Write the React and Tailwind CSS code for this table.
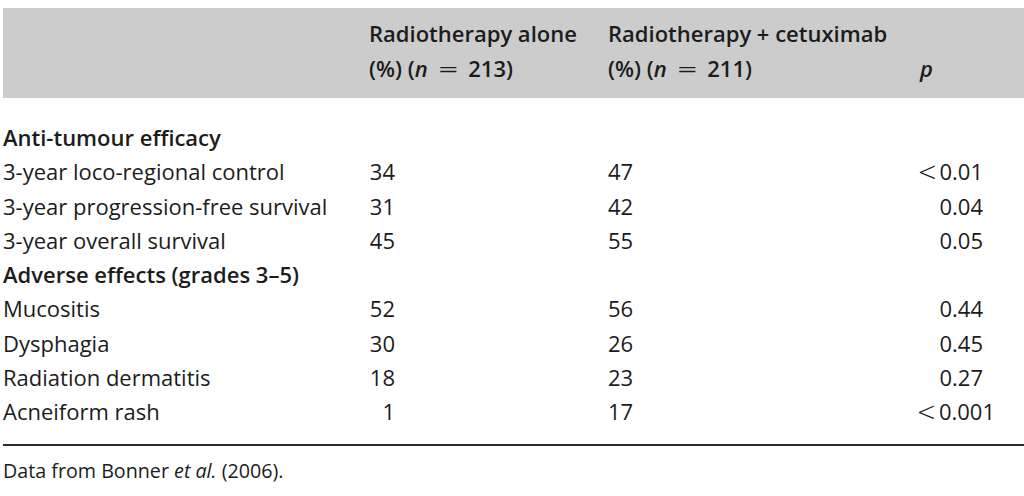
const rows = [
  { label: "Anti-tumour efficacy", heading: true },
  { label: "3-year loco-regional control", a: "34", b: "47", p: "<0.01" },
  { label: "3-year progression-free survival", a: "31", b: "42", p: "0.04" },
  { label: "3-year overall survival", a: "45", b: "55", p: "0.05" },
  { label: "Adverse effects (grades 3–5)", heading: true },
  { label: "Mucositis", a: "52", b: "56", p: "0.44" },
  { label: "Dysphagia", a: "30", b: "26", p: "0.45" },
  { label: "Radiation dermatitis", a: "18", b: "23", p: "0.27" },
  { label: "Acneiform rash", a: "1", b: "17", p: "<0.001", wide: true },
];

function PValue({ value, wide }) {
  const lt = value.startsWith("<");
  const num = lt ? value.slice(1) : value;
  return (
    <span className={wide ? "-mr-[12px]" : ""}>
      {lt && (
        <span className="mr-[3px] inline-block origin-right scale-x-[1.45] scale-y-[1.35] font-light">
          &lt;
        </span>
      )}
      {num}
    </span>
  );
}

function Count({ n }) {
  return (
    <>
      (%) (<i>n</i>
      <span className="mx-[14px] inline-block scale-x-[1.6] font-normal">=</span>
      {n})
    </>
  );
}

export default function App() {
  return (
    <div
      className="h-[496px] w-[1024px] overflow-hidden bg-white pt-[8px] pl-[3px] text-[#1c1c1c]"
      style={{ fontFamily: "'Open Sans', 'Noto Sans', sans-serif" }}
    >
      {/* header band */}
      <div className="grid grid-cols-[366px_239px_272px_103px_41px] whitespace-nowrap bg-[#cccccc] pt-[8px] pb-[12px] text-[22px] leading-[35px] font-semibold">
        <div />
        <div>
          Radiotherapy alone
          <br />
          <Count n="213" />
        </div>
        <div>
          Radiotherapy + cetuximab
          <br />
          <Count n="211" />
        </div>
        <div className="pl-[40px]">
          <br />
          <i>p</i>
        </div>
        <div />
      </div>

      {/* body */}
      <div className="mt-[22px] text-[22px] leading-[34.25px]">
        {rows.map((r) =>
          r.heading ? (
            <div key={r.label} className="font-semibold">
              {r.label}
            </div>
          ) : (
            <div key={r.label} className="grid grid-cols-[366px_239px_272px_103px] whitespace-nowrap">
              <div>{r.label}</div>
              <div>
                <span className="inline-block w-[26px] text-right">{r.a}</span>
              </div>
              <div>{r.b}</div>
              <div className="text-right">
                <PValue value={r.p} wide={r.wide} />
              </div>
            </div>
          )
        )}
      </div>

      <div className="mt-[16px] h-[2px] bg-[#2a2a2a]" />

      <div className="mt-[13px] text-[19.7px] leading-[24px]">
        Data from Bonner <i>et al.</i> (2006).
      </div>
    </div>
  );
}
